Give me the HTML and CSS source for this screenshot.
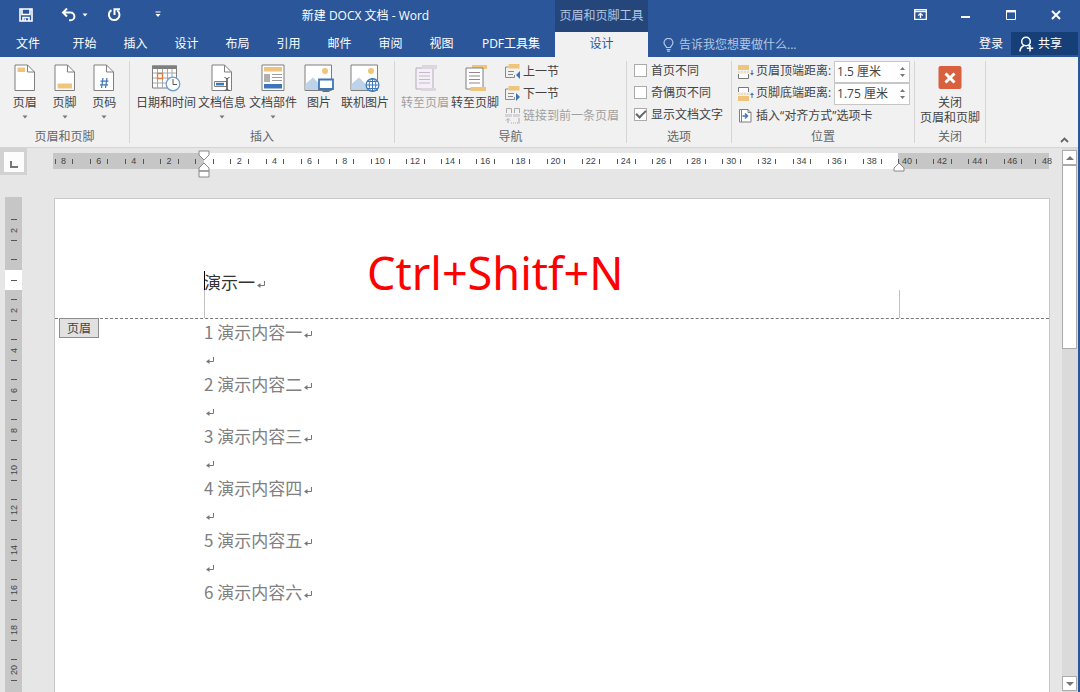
FILE: index.html
```html
<!DOCTYPE html>
<html lang="zh-CN">
<head>
<meta charset="utf-8">
<title>新建 DOCX 文档 - Word</title>
<link rel="stylesheet" href="styles.css">
</head>
<body>
<svg class="defs" width="0" height="0" aria-hidden="true">
  <symbol id="ret" viewBox="0 0 8 9"><path d="M7.500 1v4.500H2" fill="none" stroke="currentColor"/><path d="M0 5.500 3.500 3v5z" fill="currentColor"/></symbol>
  <symbol id="caret" viewBox="0 0 6 4"><path d="M.5.500h5L3 3.500z" fill="currentColor"/></symbol>
</svg>
<div class="app">
  <header class="top">
    <div class="titlebar">
      <div class="quick">
        <button class="qbtn" aria-label="保存"><svg width="14" height="14" viewBox="0 0 14 14"><path d="M1 1h12v12H1zM3 1v5.500h8V1M4 13V9.500h6V13" fill="none" stroke="#fff" stroke-width="1.600"/><path d="M5.500 10.500h1.500V13H5.500z" fill="#fff"/></svg></button>
        <button class="qbtn undo" aria-label="撤消"><svg width="15" height="14" viewBox="0 0 15 14"><path d="M2 4.500h7.500a3.800 3.800 0 0 1 0 7.800H8M6 .5l-4 4 4 4" fill="none" stroke="#fff" stroke-width="2"/></svg><svg class="tiny" width="6" height="4"><use href="#caret"/></svg></button>
        <button class="qbtn" aria-label="重复"><svg width="14" height="14" viewBox="0 0 14 14"><path d="M4.500 2.200a5.300 5.300 0 1 0 5.800.3M7.500 7V1.300h5.500" fill="none" stroke="#fff" stroke-width="2"/></svg></button>
        <button class="qbtn" aria-label="自定义快速访问工具栏"><svg width="6" height="7" viewBox="0 0 6 7"><path d="M.5 1h5" stroke="#fff"/><path d="M.5 3h5L3 6z" fill="#fff"/></svg></button>
      </div>
      <h1 class="title">新建 DOCX 文档 - Word</h1>
    </div>
    <div class="context">页眉和页脚工具</div>
    <div class="winctl">
      <button aria-label="功能区显示选项"><svg width="13" height="11" viewBox="0 0 13 11"><path d="M.7.700h11.600v9.600H.7zM.7 2.500h11.600M6.500 9V5M4.200 6.500l2.300-2 2.300 2" fill="none" stroke="#fff" stroke-width="1.300"/></svg></button>
      <button aria-label="最小化"><svg width="9" height="12" viewBox="0 0 9 12"><path d="M0 8h9" stroke="#fff" stroke-width="2"/></svg></button>
      <button aria-label="最大化"><svg width="10" height="10" viewBox="0 0 10 10"><path d="M.5.500h9v9h-9z" fill="none" stroke="#fff"/><path d="M0 1.200h10" stroke="#fff" stroke-width="2.400"/></svg></button>
      <button aria-label="关闭"><svg width="10" height="10" viewBox="0 0 10 10"><path d="m1 1 8 8M9 1 1 9" stroke="#fff" stroke-width="2"/></svg></button>
    </div>
    <nav class="tabs">
      <button class="tab file">文件</button><button class="tab">开始</button><button class="tab">插入</button><button class="tab">设计</button><button class="tab">布局</button><button class="tab">引用</button><button class="tab">邮件</button><button class="tab">审阅</button><button class="tab">视图</button><button class="tab wide">PDF工具集</button>
    </nav>
    <button class="tab active">设计</button>
    <div class="tabright">
      <label class="tell"><svg width="11" height="14" viewBox="0 0 11 14"><path d="M3.500 9.500C3.500 8 1 7.500 1 4.800a4.400 4.400 0 0 1 8.900 0C9.900 7.500 7.500 8 7.500 9.500zM3.500 11.500h4M4 13.200h3" fill="none" stroke="#b4c6e2" stroke-width="1.200"/></svg><input type="text" placeholder="告诉我您想要做什么..." aria-label="告诉我您想要做什么"></label>
      <button class="login">登录</button>
      <button class="share"><svg width="15" height="16" viewBox="0 0 15 16"><circle cx="7" cy="5.500" r="4.300" fill="none" stroke="#fff" stroke-width="1.500"/><path d="M1 15.500c0-3.500 1.800-5 4-6M9 9.200l1.500 1M11 9v6.500M7.800 12.300h6.500" fill="none" stroke="#fff" stroke-width="1.500"/></svg>共享</button>
    </div>
  </header>

  <section class="ribbon">
    <div class="group g1">
      <div class="body">
        <button class="big"><svg width="28" height="28" viewBox="0 0 28 28"><path d="M4 1h12.500l7 7v18.500H4z" fill="#fff" stroke="#7f7f7f"/><path d="M16.500 1v7h7" fill="none" stroke="#7f7f7f"/><path d="M6.500 3.500H14v4.500H6.500z" fill="#efc57b"/></svg>页眉<svg class="dd" width="6" height="4"><use href="#caret"/></svg></button>
        <button class="big"><svg width="28" height="28" viewBox="0 0 28 28"><path d="M4 1h12.500l7 7v18.500H4z" fill="#fff" stroke="#7f7f7f"/><path d="M16.500 1v7h7" fill="none" stroke="#7f7f7f"/><path d="M6.500 19.500h14.500v5H6.500z" fill="#efc57b"/></svg>页脚<svg class="dd" width="6" height="4"><use href="#caret"/></svg></button>
        <button class="big"><svg width="28" height="28" viewBox="0 0 28 28"><path d="M4 1h12.500l7 7v18.500H4z" fill="#fff" stroke="#7f7f7f"/><path d="M16.500 1v7h7" fill="none" stroke="#7f7f7f"/><path d="m13 14-1.500 10M17 14l-1.500 10M10.500 17.200h8M10 20.800h8" stroke="#3d76b8" stroke-width="1.200"/></svg>页码<svg class="dd" width="6" height="4"><use href="#caret"/></svg></button>
      </div>
      <h2>页眉和页脚</h2>
    </div>
    <div class="group g2">
      <div class="body">
        <button class="big w60"><svg width="30" height="28" viewBox="0 0 30 28"><path d="M1.500 2h24v22h-24z" fill="#fff" stroke="#7f7f7f"/><path d="M6.500 5v19M11.500 5v19M16.500 5v19M21 5v19M2 9h23M2 14h23M2 19h23" stroke="#a6a6a6"/><path d="M1 1.500h25V5H1z" fill="#7f7f7f"/><path d="M6.500 9.500h5v5h-5z" fill="#fff" stroke="#e07b3c" stroke-width="1.300"/><circle cx="22" cy="20" r="6.800" fill="#fff" stroke="#6f9fd0" stroke-width="1.300"/><path d="M22 15v5.500h4" fill="none" stroke="#555"/></svg>日期和时间</button>
        <button class="big w50"><svg width="28" height="28" viewBox="0 0 28 28"><path d="M4 1h12.500l7 7v18.500H4z" fill="#fff" stroke="#7f7f7f"/><path d="M16.500 1v7h7" fill="none" stroke="#7f7f7f"/><path d="M6.500 17.500h12v5h-12z" fill="#fff" stroke="#7f7f7f"/><path d="M8 18.800h8v2.600H8z" fill="#3d76b8"/><path d="M16.500 13.500q2.500 0 2.500 2.500v8q0 2.500-2.500 2.500M21.500 13.500q-2.500 0-2.500 2.500v8q0 2.500 2.500 2.500" fill="none" stroke="#555"/></svg>文档信息<svg class="dd" width="6" height="4"><use href="#caret"/></svg></button>
        <button class="big w50"><svg width="28" height="28" viewBox="0 0 28 28"><path d="M3 1h22v25.500H3z" fill="#fff" stroke="#7f7f7f"/><path d="M5 3h18v4.500H5z" fill="#efc57b"/><path d="M5 10h6v8H5z" fill="#b0b0b0"/><path d="M13 10.500h10M13 13.500h10M13 16.500h10" stroke="#9a9a9a"/><path d="M5 20h18v4.500H5z" fill="#3d76b8"/></svg>文档部件<svg class="dd" width="6" height="4"><use href="#caret"/></svg></button>
        <button class="big"><svg width="30" height="28" viewBox="0 0 30 28"><path d="M1 1h26.500v25.500H1z" fill="#fff" stroke="#7f7f7f"/><path d="M1.500 26v-6L9 13.500 22 26z" fill="#bfd3e8"/><circle cx="21" cy="7" r="3" fill="#efc57b"/><path d="M15 15.500h14v9.500H15z" fill="#fff" stroke="#3d76b8" stroke-width="1.800"/><path d="M22 25v2.500M18.500 27.500h7" stroke="#3d76b8" stroke-width="1.300"/></svg>图片</button>
        <button class="big w50"><svg width="30" height="28" viewBox="0 0 30 28"><path d="M1 1h26.500v25.500H1z" fill="#fff" stroke="#7f7f7f"/><path d="M1.500 26v-6L9 13.500 22 26z" fill="#bfd3e8"/><circle cx="21" cy="7" r="3" fill="#efc57b"/><circle cx="22.500" cy="21" r="6.400" fill="#fff" stroke="#3d76b8" stroke-width="1.200"/><path d="M16 21h13M22.500 14.500v13M17.500 17.500h10M17.500 24.500h10" stroke="#3d76b8"/><ellipse cx="22.500" cy="21" rx="3.300" ry="6.400" fill="none" stroke="#3d76b8"/></svg>联机图片</button>
      </div>
      <h2>插入</h2>
    </div>
    <div class="group g3">
      <div class="body">
        <button class="big w50" disabled><svg width="28" height="28" viewBox="0 0 28 28"><path d="M5 4h17v21H5z" fill="#f5f0f7" stroke="#b5adb9"/><path d="M8 8.500h11M8 12h11M8 15.500h11M8 19h11" stroke="#c2bac6"/><path d="M11 1h15v4H11zM10 24h15v3H10z" fill="#ddd5df"/></svg>转至页眉</button>
        <button class="big w50"><svg width="28" height="28" viewBox="0 0 28 28"><path d="M11 1h15v4h-4V4H11z" fill="#efc57b"/><path d="M5 4h17v21H5z" fill="#fff" stroke="#7f7f7f"/><path d="M8 8.500h11M8 12h11M8 15.500h11M8 19h11" stroke="#8a8a8a"/><path d="M9.500 23H25v4H9.500z" fill="#efc57b"/></svg>转至页脚</button>
        <div class="rows">
          <button class="small"><svg width="16" height="16" viewBox="0 0 16 16"><path d="M3.500 3H.5v10.500h9V11M3 7.500h6M3 10.500h5" stroke="#8a8a8a" fill="none"/><path d="M3.500 0h11v4.500h-11z" fill="#efc57b"/><path d="M15 7v8l-4-4z" fill="#3d76b8"/></svg>上一节</button>
          <button class="small"><svg width="16" height="16" viewBox="0 0 16 16"><path d="M3.500 3H.5v10.500h9V11M3 7.500h6M3 10.500h5" stroke="#8a8a8a" fill="none"/><path d="M3.500 0h11v4.500h-11z" fill="#efc57b"/><path d="M11 7v8l4-4z" fill="#3d76b8"/></svg>下一节</button>
          <button class="small" disabled><svg width="16" height="16" viewBox="0 0 16 16"><path d="M1.500 5V.5h5V5M9.500 5V.5h5V5M3 15v-4M1 12.500l2-2 2 2M14 10v5.500" fill="none" stroke="#a9a9a9"/><path d="M0 6h7v3H0zM8 6h7v3H8z" fill="#d8d2da"/><path d="M6 15h7" stroke="#a9a9a9" stroke-dasharray="1 1"/></svg>链接到前一条页眉</button>
        </div>
      </div>
      <h2>导航</h2>
    </div>
    <div class="group g4">
      <div class="body rows">
        <label class="check"><input type="checkbox">首页不同</label>
        <label class="check"><input type="checkbox">奇偶页不同</label>
        <label class="check"><input type="checkbox" checked>显示文档文字</label>
      </div>
      <h2>选项</h2>
    </div>
    <div class="group g5">
      <div class="body rows">
        <div class="dist"><svg width="16" height="14" viewBox="0 0 16 14"><path d="M0 0h11v5H0z" fill="#efc57b"/><path d="M0 7h11" stroke="#efc57b" stroke-dasharray="2 1"/><path d="M.5 9v4.500h10V9" fill="#fff" stroke="#777"/><path d="M14 5v4" stroke="#3d76b8"/><path d="M12 8h4l-2 2.500z" fill="#3d76b8"/></svg><label for="hd">页眉顶端距离:</label><span class="spin"><input id="hd" type="text" value="1.5 厘米"><span class="arrows"><button aria-label="增大页眉距离"><svg width="5" height="3" viewBox="0 0 5 3"><path d="M0 3h5L2.500 0z"/></svg></button><button aria-label="减小页眉距离"><svg width="5" height="3" viewBox="0 0 5 3"><path d="M0 0h5L2.500 3z"/></svg></button></span></span></div>
        <div class="dist"><svg width="16" height="14" viewBox="0 0 16 14"><path d="M.5 5V.5h10V5" fill="#fff" stroke="#777"/><path d="M0 7h11" stroke="#efc57b" stroke-dasharray="2 1"/><path d="M0 9h11v5H0z" fill="#efc57b"/><path d="M14 7v4" stroke="#3d76b8"/><path d="M12 8h4l-2-2.500z" fill="#3d76b8"/></svg><label for="fd">页脚底端距离:</label><span class="spin"><input id="fd" type="text" value="1.75 厘米"><span class="arrows"><button aria-label="增大页脚距离"><svg width="5" height="3" viewBox="0 0 5 3"><path d="M0 3h5L2.500 0z"/></svg></button><button aria-label="减小页脚距离"><svg width="5" height="3" viewBox="0 0 5 3"><path d="M0 0h5L2.500 3z"/></svg></button></span></span></div>
        <button class="small"><svg width="16" height="16" viewBox="0 0 16 16"><path d="M1.500 1.500h8.500l3 3v9.500H1.500z" fill="#fff" stroke="#7f7f7f"/><path d="M10 1.500v3h3M3.500 2v12" fill="none" stroke="#7f7f7f"/><path d="M4.500 8H10M7 5.500 9.500 8 7 10.500" fill="none" stroke="#3d76b8" stroke-width="1.500"/></svg>插入“对齐方式”选项卡</button>
      </div>
      <h2>位置</h2>
    </div>
    <div class="group g6">
      <div class="body">
        <button class="big close"><svg width="28" height="28" viewBox="0 0 28 28"><rect x="2.500" y="2" width="23" height="23" rx="2" fill="#d9603f"/><path d="m9.500 9.500 9 9M18.500 9.500l-9 9" stroke="#fff" stroke-width="3"/></svg>关闭<span>页眉和页脚</span></button>
      </div>
      <h2>关闭</h2>
    </div>
    <button class="collapse" aria-label="折叠功能区"><svg width="9" height="6" viewBox="0 0 9 6"><path d="m1 5 3.500-3.500L8 5" fill="none" stroke="#666" stroke-width="1.800"/></svg></button>
  </section>

  <main class="work">
    <div class="left">
      <button class="corner" aria-label="制表符"><span><svg width="8" height="7" viewBox="0 0 8 7"><path d="M1 0v6h7" fill="none" stroke="#777" stroke-width="2"/></svg></span></button>
      <div class="vruler">
        <span>2</span><span class="zero"></span><span>2</span><span>4</span><span>6</span><span>8</span><span>10</span><span>12</span><span>14</span><span>16</span><span>18</span><span>20</span>
      </div>
    </div>
    <div class="center">
      <div class="hruler">
        <div class="band"><i></i><b></b><i></i></div>
        <div class="marks">
          <span class="first">8</span><span>6</span><span>4</span><span>2</span><span></span><span>2</span><span>4</span><span>6</span><span>8</span><span>10</span><span>12</span><span>14</span><span>16</span><span>18</span><span>20</span><span>22</span><span>24</span><span>26</span><span>28</span><span>30</span><span>32</span><span>34</span><span>36</span><span>38</span><span>40</span><span>42</span><span>44</span><span>46</span><span class="last">48</span>
        </div>
        <svg class="indent" width="12" height="28" viewBox="0 0 12 28"><path d="M1 1h10v4L6 10 1 5zM6 13l5 5v3H1v-3zM1 21h10v6H1z" fill="#fff" stroke="#888"/></svg>
        <svg class="rindent" width="12" height="10" viewBox="0 0 12 10"><path d="m6 1 5 5v3H1V6z" fill="#fff" stroke="#888"/></svg>
      </div>
      <article class="page">
        <div class="phead">
          <p>演示一<svg class="ret" width="8" height="9"><use href="#ret"/></svg></p>
          <span class="bound"></span>
          <strong class="note">Ctrl+Shitf+N</strong>
          <span class="tag">页眉</span>
        </div>
        <div class="text">
          <p>1 演示内容一<svg class="ret" width="8" height="9"><use href="#ret"/></svg></p>
          <p><svg class="ret" width="8" height="9"><use href="#ret"/></svg></p>
          <p>2 演示内容二<svg class="ret" width="8" height="9"><use href="#ret"/></svg></p>
          <p><svg class="ret" width="8" height="9"><use href="#ret"/></svg></p>
          <p>3 演示内容三<svg class="ret" width="8" height="9"><use href="#ret"/></svg></p>
          <p><svg class="ret" width="8" height="9"><use href="#ret"/></svg></p>
          <p>4 演示内容四<svg class="ret" width="8" height="9"><use href="#ret"/></svg></p>
          <p><svg class="ret" width="8" height="9"><use href="#ret"/></svg></p>
          <p>5 演示内容五<svg class="ret" width="8" height="9"><use href="#ret"/></svg></p>
          <p><svg class="ret" width="8" height="9"><use href="#ret"/></svg></p>
          <p>6 演示内容六<svg class="ret" width="8" height="9"><use href="#ret"/></svg></p>
        </div>
      </article>
    </div>
    <div class="scroll">
      <button aria-label="向上滚动"><svg width="8" height="4" viewBox="0 0 8 4"><path d="M0 4h8L4 0z" fill="#777"/></svg></button>
      <div class="track"><div class="thumb"></div></div>
      <button aria-label="向下滚动"><svg width="8" height="4" viewBox="0 0 8 4"><path d="M0 0h8L4 4z" fill="#777"/></svg></button>
    </div>
  </main>
</div>
</body>
</html>
```

FILE: styles.css
```css
* { box-sizing: border-box; }
body {
  margin: 0;
  font: 12px/16px "Open Sans", "Noto Sans CJK SC", sans-serif;
  color: #444;
}
h1, h2, p { margin: 0; font-size: inherit; font-weight: 400; }
button, input {
  font: inherit;
  color: inherit;
  border: 0;
  padding: 0;
  margin: 0;
  background: none;
}
button { display: flex; align-items: center; justify-content: center; white-space: nowrap; }
svg { display: block; flex: none; }
.defs { position: absolute; }

.app {
  display: flex;
  flex-direction: column;
  height: 100vh;
  overflow: hidden;
  background: #e6e6e6;
  border-right: 2px solid #2b579a;
}

/* Title bar and tabs */
.top {
  display: grid;
  grid-template-columns: auto 93px 1fr;
  grid-template-rows: 32px 25px;
  background: #2b579a;
  color: #fff;
}
.titlebar { display: flex; align-items: center; padding-bottom: 3px; }
.quick { display: flex; align-items: center; padding-left: 4px; }
.qbtn { width: 44px; height: 28px; }
.undo { gap: 6px; padding-left: 8px; }
.title { flex: 1; padding: 3px 4px 0 0; text-align: center; }
.context {
  display: flex;
  align-items: center;
  justify-content: center;
  background: #25467a;
  color: #b4c6e2;
  white-space: nowrap;
}
.winctl { display: flex; justify-content: flex-end; }
.winctl button { width: 45px; height: 29px; }
.tabs { display: flex; }
.tab { min-width: 51px; padding-bottom: 2px; }
.file { width: 56px; margin-right: 3px; }
.wide { width: 88px; }
.active { background: #f1f1f1; color: #2b579a; }
.tabright { display: flex; align-items: center; padding-bottom: 2px; }
.tell { display: flex; align-items: center; gap: 5px; padding: 2px 0 0 15px; flex: 1; }
.tell input { flex: 1; min-width: 0; outline: 0; }
.tell input::placeholder { color: #b4c6e2; opacity: 1; }
.login { margin-right: 8px; }
.share { width: 67px; height: 23px; gap: 4px; padding-right: 8px; background: #163f78; }

/* Ribbon */
.ribbon {
  display: flex;
  padding: 4px 0;
  background: #f1f1f1;
  border-bottom: 1px solid #d5d5d5;
}
.group {
  display: flex;
  flex-direction: column;
  border-right: 1px solid #d5d5d5;
  flex: none;
}
.group h2 { text-align: center; color: #666; line-height: 12px; }
.body { display: flex; height: 70px; padding: 0 5px; }
.g1 { width: 130px; }
.g2 .body { gap: 1px; padding: 0 4px 0 6px; }
.g3 .body { padding: 0 7px 0 5px; }
.big {
  flex-direction: column;
  justify-content: flex-start;
  width: 40px;
  padding-top: 3px;
  line-height: 16px;
}
.big svg:first-child { margin-bottom: 3px; }
.w60 { width: 60px; }
.w50 { width: 50px; }
.dd { margin-top: 4px; color: #777; }
.close { width: 60px; line-height: 15px; }
button:disabled { color: #a0a0a0; }
.rows { display: flex; flex-direction: column; }
.g3 .rows { padding-left: 5px; }
.small { height: 22px; gap: 2px; justify-content: flex-start; }
.g4 .body { padding: 0 8px 0 7px; }
.check { display: flex; align-items: center; gap: 4px; height: 22px; padding-bottom: 3px; }
.check input {
  appearance: none;
  width: 13px;
  height: 13px;
  background: #fff;
  border: 1px solid #ababab;
  display: grid;
  place-items: center;
}
.check input:checked::before {
  content: "";
  width: 8px;
  height: 4px;
  margin-bottom: 3px;
  border: solid #666;
  border-width: 0 0 2px 2px;
  transform: rotate(-45deg);
}
.g5 .body { padding: 0 4px 0 6px; }
.dist { display: flex; align-items: center; gap: 2px; height: 22px; }
.dist label { width: 76px; padding-bottom: 2px; white-space: nowrap; }
.spin { display: flex; width: 76px; height: 22px; background: #fff; border: 1px solid #c6c6c6; }
.spin input { flex: 1; min-width: 0; padding-left: 2px; outline: 0; }
.arrows { display: flex; flex-direction: column; justify-content: space-evenly; width: 14px; }
.arrows svg { fill: #777; }
.collapse { margin-left: auto; width: 28px; align-items: flex-end; }

/* Workspace */
.work { display: flex; flex: 1; min-height: 0; }
.left { display: flex; flex-direction: column; width: 46px; flex: none; }
.corner { width: 27px; height: 27px; background: #d2d2d2; }
.corner span {
  display: flex;
  align-items: flex-end;
  justify-content: center;
  width: 20px;
  height: 20px;
  padding-bottom: 4px;
  background: #fcfcfc;
}
.vruler {
  flex: 1;
  width: 17px;
  margin: 22px 0 0 5px;
  padding-top: 13px;
  background: #c6c6c6;
  overflow: hidden;
}
.vruler span {
  display: flex;
  align-items: center;
  justify-content: center;
  width: 17px;
  height: 40px;
  font: 9px/10px "Liberation Sans", sans-serif;
  writing-mode: vertical-rl;
  transform: rotate(180deg);
  position: relative;
}
.vruler span::before, .vruler span::after {
  content: "";
  position: absolute;
  left: 5px;
  width: 6px;
  height: 1px;
  background: #555;
}
.vruler span::before { top: 9px; }
.vruler span::after { bottom: 9px; }
.vruler .zero { background: linear-gradient(#fff 50%, #c6c6c6 50%); }

.center { display: flex; flex-direction: column; flex: 1; min-width: 0; }
.hruler { position: relative; padding: 5px 10px 0 0; height: 50px; }
.band { display: flex; height: 16px; margin: 0 3px 0 7px; }
.band i { flex: 151; background: #c6c6c6; }
.band b { flex: 693; background: #fff; }
.marks {
  position: absolute;
  inset: 5px 10px auto 0;
  display: flex;
  height: 16px;
  font: 9px/16px "Liberation Sans", sans-serif;
}
.marks span { flex: 1 1 0; display: flex; align-items: center; justify-content: center; position: relative; }
.marks span::before, .marks span::after {
  content: "";
  position: absolute;
  top: 6px;
  left: 25%;
  width: 1px;
  height: 5px;
  background: #555;
}
.marks span::after { left: 75%; }
.marks .last { flex: 0 0 22px; justify-content: flex-end; }
.marks .last::after { display: none; }
.indent, .rindent { position: absolute; top: 2px; left: 15%; }
.rindent { top: 14px; left: 83.4%; }

.page {
  flex: 1;
  margin: 0 12px 0 8px;
  background: #fff;
  border: solid #c8c8c8;
  border-width: 1px 1px 0;
  font: 17px/26px "Noto Sans CJK SC", sans-serif;
}
.phead {
  position: relative;
  height: 120px;
  padding: 70px 0 0 149px;
  border-bottom: 1px dashed #777;
  color: #333;
}
.phead p { display: flex; align-items: center; }
.phead p::before { content: ""; width: 1px; height: 22px; margin-right: -1px; background: #000; }
.bound {
  position: absolute;
  left: 15%;
  right: 15%;
  bottom: 0;
  height: 28px;
  border: solid #c0c0c0;
  border-width: 0 1px;
}
.note {
  position: absolute;
  top: 44px;
  left: 312px;
  font: 45px/60px "Noto Sans", sans-serif;
  color: #f00;
}
.tag {
  position: absolute;
  top: 119px;
  left: 4px;
  padding: 0 7px;
  border: 1px solid #8c8c8c;
  background: #e1e1e1;
  font-size: 12px;
  line-height: 18px;
  color: #444;
}
.text { padding-left: 149px; color: #808080; }
.text p { display: flex; align-items: center; height: 26px; }
.ret { margin: 4px 0 0 2px; color: #777; }

/* Scroll bar */
.scroll { display: flex; flex-direction: column; width: 16px; padding: 2px 1px 1px 0; background: #dadada; }
.scroll button { height: 15px; background: #fff; border: 1px solid #ababab; }
.track { flex: 1; }
.thumb { height: 36%; background: #fff; border: 1px solid #ababab; }
```
